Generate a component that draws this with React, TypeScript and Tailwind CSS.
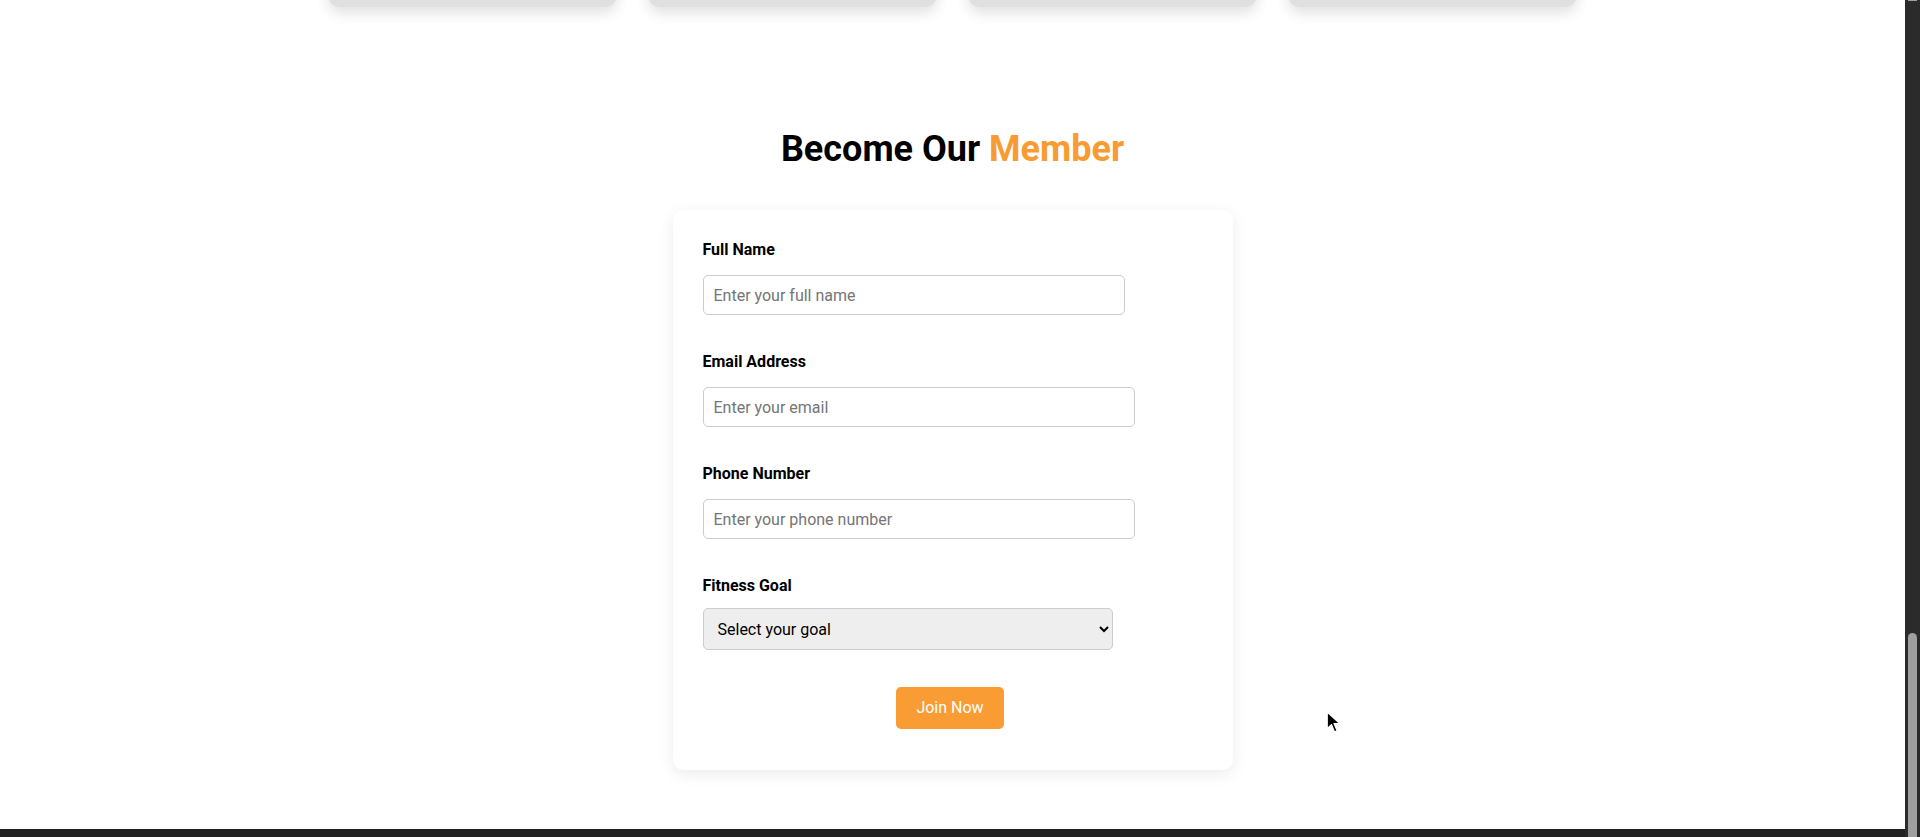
export default function App() {
  const cards = [1, 2, 3, 4];

  return (
    <div className="relative flex h-[837px] w-full overflow-hidden bg-white font-['Roboto',sans-serif]">
      <div className="flex min-w-0 flex-1 flex-col">
        {/* bottom edge of the program cards above */}
        <div className="-mt-[33px] flex justify-center gap-[31px]">
          {cards.map((c) => (
            <div key={c} className="h-[40px] w-[289px] rounded-b-[12px] bg-[#e0e0e0] shadow-[0_6px_14px_rgba(0,0,0,0.12)]" />
          ))}
        </div>

        <section className="flex flex-col items-center">
          <h2 className="mt-[121px] text-[36px] font-bold leading-[42px] text-black">
            Become Our <span className="text-[#f89b32]">Member</span>
          </h2>

          <form className="mt-[40px] w-[560px] rounded-[10px] bg-white px-[30px] pt-[30px] pb-[41px] shadow-[0_4px_16px_rgba(0,0,0,0.08)]">
            <label className="mb-[16px] block text-[16px] font-bold leading-[19px] text-black">Full Name</label>
            <input
              type="text"
              placeholder="Enter your full name"
              className="mb-[37px] block h-[40px] w-[422px] rounded-[5px] border border-[#cccccc] px-[10px] text-[16px] placeholder:text-[#757575] outline-none"
            />

            <label className="mb-[16px] block text-[16px] font-bold leading-[19px] text-black">Email Address</label>
            <input
              type="email"
              placeholder="Enter your email"
              className="mb-[37px] block h-[40px] w-[432px] rounded-[5px] border border-[#cccccc] px-[10px] text-[16px] placeholder:text-[#757575] outline-none"
            />

            <label className="mb-[16px] block text-[16px] font-bold leading-[19px] text-black">Phone Number</label>
            <input
              type="tel"
              placeholder="Enter your phone number"
              className="mb-[37px] block h-[40px] w-[432px] rounded-[5px] border border-[#cccccc] px-[10px] text-[16px] placeholder:text-[#757575] outline-none"
            />

            <label className="mb-[13px] block text-[16px] font-bold leading-[19px] text-black">Fitness Goal</label>
            <select
              defaultValue=""
              className="block h-[42px] w-[410px] rounded-[5px] border border-[#cccccc] bg-[#eeeeee] px-[10px] text-[16px] text-black"
            >
              <option value="" disabled>
                Select your goal
              </option>
              <option>Weight Loss</option>
              <option>Muscle Gain</option>
              <option>Endurance</option>
            </select>

            <div className="mt-[37px] flex justify-center pr-[5px]">
              <button type="button" className="h-[42px] w-[108px] rounded-[5px] bg-[#f89c33] text-[16px] text-white">
                Join Now
              </button>
            </div>
          </form>
        </section>

        <footer className="mt-auto h-[8px] bg-[#222222]" />
      </div>

      {/* window scrollbar */}
      <div className="flex w-[15px] flex-col justify-between bg-[#2b2b2b]">
        <div className="ml-[3px] h-[1px] w-[9px] bg-[#9f9f9f]" />
        <div className="ml-[3px] h-[204px] w-[9px] rounded-t-full bg-[#9f9f9f]" />
      </div>

      {/* mouse pointer */}
      <svg className="absolute left-[1326px] top-[711px]" width="15" height="23" viewBox="0 0 14 22">
        <path d="M1 1 L1 17 L5 13 L8 20 L10.5 19 L7.5 12 L13 12 Z" fill="#000" stroke="#fff" strokeWidth="1.2" strokeLinejoin="round" />
      </svg>
    </div>
  );
}
